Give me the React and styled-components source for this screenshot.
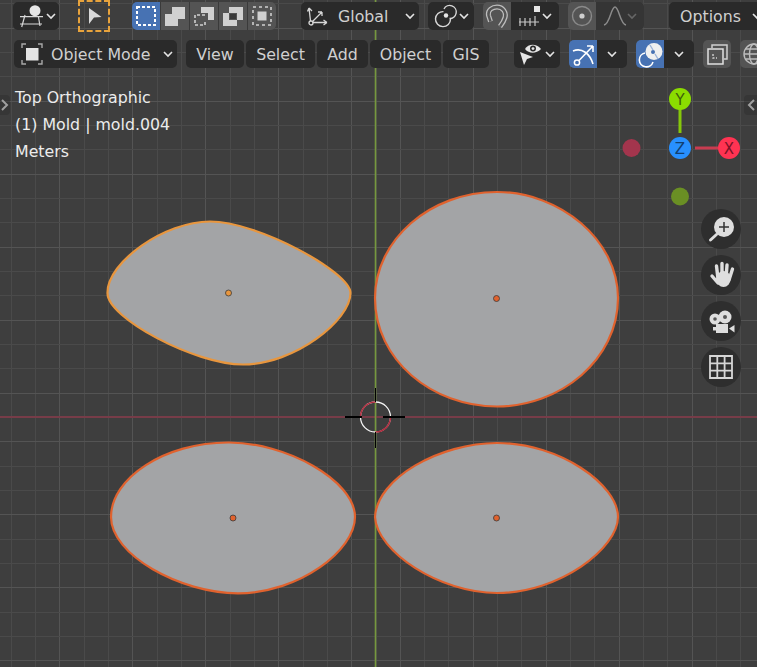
import React from "react";
import styled, { createGlobalStyle } from "styled-components";

const GlobalStyle = createGlobalStyle`
	html, body {
		margin: 0;
		padding: 0;
		background: #3d3d3d;
	}
`;

const Viewport = styled.div`
	position: relative;
	width: 757px;
	height: 667px;
	overflow: hidden;
	background: #3e3e3e;
	font-family: "DejaVu Sans", "Liberation Sans", sans-serif;
	font-size: 15.8px;
	color: #d0d0d0;
`;

const Scene = styled.svg`
	position: absolute;
	inset: 0;
`;

const Header = styled.header`
	position: relative;
	display: flex;
	flex-direction: column;
	gap: 10px;
	padding-top: 2px;
`;

const Row = styled.div`
	display: flex;
	align-items: center;
	height: 28px;
	padding-left: ${(p) => p.$pad}px;
`;

const Pill = styled.div`
	display: flex;
	flex: none;
	align-items: center;
	justify-content: ${(p) => (p.$center ? "center" : "flex-start")};
	gap: ${(p) => p.$gap || 0}px;
	width: ${(p) => p.$w}px;
	height: 28px;
	margin-left: ${(p) => p.$ml || 0}px;
	padding-left: ${(p) => p.$pl || 0}px;
	box-sizing: border-box;
	border-radius: 5px;
	background: #2a2a2a;
	white-space: nowrap;
`;

const PushRight = styled.span`
	display: flex;
	margin-left: auto;
	margin-right: ${(p) => p.$mr}px;
`;

const Split = styled.div`
	display: flex;
	flex: none;
	gap: ${(p) => p.$gap || 0}px;
	height: 28px;
	margin-left: ${(p) => p.$ml || 0}px;
	border-radius: 5px;
	overflow: hidden;
	background: ${(p) => (p.$gap ? "#3a3a3a" : "transparent")};
`;

const tones = {
	blue: "#4772b3",
	gray: "#545454",
	dark: "#2a2a2a",
	dim: "#353535",
};

const Segment = styled.div`
	display: flex;
	align-items: center;
	justify-content: center;
	width: ${(p) => p.$w || 28}px;
	height: 28px;
	background: ${(p) => tones[p.$tone || "gray"]};
`;

const ToolButton = styled.div`
	display: flex;
	flex: none;
	align-items: center;
	justify-content: center;
	width: 32px;
	height: 32px;
	margin: 0 0 0 ${(p) => p.$ml}px;
	box-sizing: border-box;
	border: 2px dashed #e8a33c;
`;

const SquareButton = styled.div`
	display: flex;
	flex: none;
	align-items: center;
	justify-content: center;
	width: 28px;
	height: 28px;
	margin-left: ${(p) => p.$ml}px;
	border-radius: 5px;
	background: #545454;
`;

const Stats = styled.div`
	position: absolute;
	top: 84px;
	left: 15px;
	color: #ececec;
	line-height: 27px;
`;

const SideTab = styled.div`
	position: absolute;
	top: 95px;
	${(p) => (p.$right ? "right: 0;" : "left: 0;")}
	display: flex;
	align-items: center;
	justify-content: center;
	width: ${(p) => (p.$right ? 13 : 10)}px;
	height: 20px;
	border-radius: ${(p) => (p.$right ? "4px 0 0 4px" : "0 4px 4px 0")};
	background: rgba(40, 40, 40, 0.35);
`;

const Gizmo = styled.svg`
	position: absolute;
	top: 85px;
	left: 618px;
`;

const GizmoLetter = styled.text`
	font-family: "DejaVu Sans", sans-serif;
	font-size: 15px;
	text-anchor: middle;
`;

const NavColumn = styled.nav`
	position: absolute;
	top: 209px;
	right: 16px;
	display: flex;
	flex-direction: column;
	gap: 6px;
`;

const NavButton = styled.div`
	display: flex;
	align-items: center;
	justify-content: center;
	width: 40px;
	height: 40px;
	border-radius: 50%;
	background: #2e2e2e;
`;

const INK = "#d8d8d8";

const Chevron = ({ dim }) => (
	<svg width="10" height="7" viewBox="0 0 10 7" style={{ flex: "none" }}>
		<polyline points="1,1 5,5 9,1" fill="none" stroke={dim ? "#666" : "#e4e4e4"} strokeWidth="1.6" />
	</svg>
);

const SideArrow = ({ left }) => (
	<svg width="8" height="12" viewBox="0 0 8 12">
		<polyline points={left ? "7,1 2,6 7,11" : "1,1 6,6 1,11"} fill="none" stroke="#a0a0a0" strokeWidth="2" />
	</svg>
);

const Ico = ({ size = 22, children }) => (
	<svg width={size} height={size} viewBox={`0 0 ${size} ${size}`} fill="none" style={{ flex: "none" }}>
		{children}
	</svg>
);

const EditorIcon = () => (
	<Ico size={24}>
		<circle cx="15" cy="6.7" r="5.5" fill="#e6e6e6" />
		<path d="M0 12.7H23M0 20H22M5 11L1.7 23M18.3 12L20 22" stroke={INK} strokeWidth="1.2" />
	</Ico>
);

const ArrowIcon = () => (
	<Ico size={28}>
		<polygon points="9,6 21.5,15 14,15.5 9,22" fill="#d9d9d9" />
	</Ico>
);

const SelectNew = () => (
	<Ico size={28}>
		<rect x="5" y="5" width="18" height="18" stroke="#fff" strokeWidth="2" strokeDasharray="3 2" />
	</Ico>
);

const SelectExtend = () => (
	<Ico size={28}>
		<path d="M11 5H24V17H17V24H4V12H11Z" fill="#d0d0d0" />
	</Ico>
);

const SelectSubtract = () => (
	<Ico size={28}>
		<path d="M11 5H24V18H18V11H11Z" fill="#d0d0d0" />
		<path d="M15 13H5V23H15V19" stroke="#cfcfcf" strokeWidth="1.6" strokeDasharray="3 2" />
	</Ico>
);

const SelectInvert = () => (
	<Ico size={28}>
		<path d="M10 5H24V18H18V11H10Z" fill="#d0d0d0" />
		<path d="M4 11H10V18H18V24H4Z" fill="#d0d0d0" />
		<rect x="11" y="12" width="6" height="5" fill="#3a3a3a" />
	</Ico>
);

const SelectIntersect = () => (
	<Ico size={28}>
		<rect x="5" y="5" width="18" height="18" stroke="#cfcfcf" strokeWidth="1.6" strokeDasharray="3 3" />
		<rect x="9.5" y="9.5" width="9" height="9" fill="#d0d0d0" />
	</Ico>
);

const OrientationIcon = () => (
	<Ico>
		<circle cx="4" cy="18" r="2" stroke={INK} strokeWidth="1.3" />
		<path
			d="M3.5 16L2 3M2 3L0.5 6.5M2 3L5 6M5.5 17.5H20M20 17.5L16.5 15M20 17.5L16.5 20M5.5 16.5L15 7M15 7H11M15 7V11"
			stroke={INK}
			strokeWidth="1.3"
		/>
	</Ico>
);

const PivotIcon = () => (
	<Ico size={24}>
		<path d="M9.5 7.6A7.5 7.5 0 1 0 16.5 15" stroke={INK} strokeWidth="1.4" />
		<path d="M10 5A6.5 6.5 0 1 1 15.5 14.5" stroke={INK} strokeWidth="1.4" />
		<circle cx="12" cy="11.5" r="2.2" fill="#e6e6e6" />
	</Ico>
);

const MagnetIcon = () => {
	const arc = "M5.5 17.5L3.5 11.5C2.5 6 7.5 3 12 3C18 3 21.5 8.5 20 13.5C19 17 17 20 15 22.5";
	return (
		<Ico size={24}>
			<path d={arc} stroke="#bdbdbd" strokeWidth="5" />
			<path d={arc} stroke="#545454" strokeWidth="2.4" />
		</Ico>
	);
};

const IncrementIcon = () => (
	<Ico size={24}>
		<rect x="16" y="2" width="6" height="6" fill="#e6e6e6" />
		<path d="M1 18H21M2 14V22M7 14V22M12 14V22M17 12V22" stroke="#c8c8c8" strokeWidth="1.2" />
	</Ico>
);

const ProportionalIcon = () => (
	<Ico size={24}>
		<circle cx="12" cy="12" r="9.5" stroke="#8a8a8a" strokeWidth="1.4" />
		<circle cx="12" cy="12" r="2.6" fill="#cfcfcf" />
	</Ico>
);

const FalloffIcon = () => (
	<Ico size={24}>
		<path d="M1 21C7 20 8 3 12 3C16 3 17 20 23 21" stroke="#8a8a8a" strokeWidth="1.5" />
	</Ico>
);

const ModeIcon = () => (
	<Ico>
		<rect x="5" y="5" width="12.5" height="12.5" fill="#e4e4e4" />
		<path d="M1 5V1H5M17 1H21V5M21 17V21H17M5 21H1V17" stroke="#a8a8a8" strokeWidth="1.4" />
	</Ico>
);

const VisibilityIcon = () => (
	<Ico size={24}>
		<path d="M7 7C10 2 18 1 23 7C18 12 11 12 7 7Z" fill="#e6e6e6" />
		<circle cx="15" cy="6.6" r="3" fill="#2a2a2a" />
		<circle cx="15" cy="6.6" r="1.4" fill="#e6e6e6" />
		<polygon points="2,10 15,15 9,17 6,23" fill="#e6e6e6" />
	</Ico>
);

const GizmoIcon = () => (
	<Ico size={28}>
		<circle cx="8" cy="22.5" r="2.6" stroke="#fff" strokeWidth="1.5" />
		<path d="M10 20.5L24 6M24 6H18M24 6V12M4 11C13 7 21 14 24 24" stroke="#fff" strokeWidth="1.6" />
	</Ico>
);

const OverlayIcon = () => (
	<Ico size={28}>
		<path d="M9 13A7 7 0 1 0 17 22" stroke="#fff" strokeWidth="1.6" />
		<circle cx="18" cy="11.5" r="8.5" fill="#f0f0f0" />
		<circle cx="17" cy="12" r="2" fill="#4772b3" />
		<path d="M14 5L17 10M19 14L22 19" stroke="#9db4d8" strokeWidth="1.4" />
	</Ico>
);

const XrayIcon = () => (
	<Ico size={28}>
		<path d="M9 8V5H24V19H21" stroke="#cfcfcf" strokeWidth="1.5" />
		<rect x="5" y="9" width="15" height="15" stroke="#e0e0e0" strokeWidth="1.5" />
		<path d="M10 14V18H14" stroke="#d0d0d0" strokeWidth="1.4" strokeDasharray="2 1.5" />
	</Ico>
);

const GlobeIcon = () => (
	<Ico size={28}>
		<circle cx="14" cy="14" r="10" stroke="#bdbdbd" strokeWidth="1.4" />
		<ellipse cx="14" cy="14" rx="4.5" ry="10" stroke="#bdbdbd" strokeWidth="1.4" />
		<path d="M4 14H24M5.5 9H22.5M5.5 19H22.5" stroke="#bdbdbd" strokeWidth="1.3" />
	</Ico>
);

const ZoomIcon = () => (
	<Ico size={40}>
		<circle cx="23" cy="18" r="10" fill="#dedede" />
		<path d="M23 13V23M18 18H28" stroke="#333" strokeWidth="1.5" />
		<path d="M15.5 25.5L9.5 31" stroke="#dedede" strokeWidth="3" strokeLinecap="round" />
	</Ico>
);

const HandIcon = () => (
	<Ico size={40}>
		<path
			d="M17 28L11 21M17 24L15.5 11M21 24L21 8.5M25 24L26 10M28 25L31.5 14"
			stroke="#dedede"
			strokeWidth="3.4"
			strokeLinecap="round"
		/>
		<ellipse cx="22.5" cy="24" rx="7" ry="8" fill="#dedede" />
	</Ico>
);

const CameraIcon = () => (
	<Ico size={40}>
		<circle cx="14" cy="18" r="5.5" fill="#dedede" />
		<circle cx="24" cy="16" r="6.5" fill="#dedede" />
		<circle cx="14" cy="18" r="1.8" fill="#555" />
		<circle cx="24" cy="16" r="2" fill="#555" />
		<rect x="15" y="23" width="12" height="9" fill="#dedede" />
		<rect x="12" y="26" width="3" height="3.5" fill="#dedede" />
		<polygon points="28,27.5 33.5,24 33.5,31.5" fill="#dedede" />
	</Ico>
);

const GridIcon = () => (
	<Ico size={40}>
		<path d="M9 9H31V31H9ZM16.3 9V31M23.6 9V31M9 16.3H31M9 23.6H31" stroke="#d6d6d6" strokeWidth="1.8" />
	</Ico>
);

const STEP = 24.33;
const CX = 375.5;
const CY = 417;
const steps = Array.from({ length: 61 }, (_, i) => i - 30);
const gridTone = (k) => (Math.abs(k) % 3 === 1 ? "#545454" : "#4a4a4a");

const GridLines = () => (
	<g shapeRendering="crispEdges">
		{steps.map((k) => (
			<line
				key={`v${k}`}
				x1={Math.round(CX + k * STEP) + 0.5}
				x2={Math.round(CX + k * STEP) + 0.5}
				y1="0"
				y2="667"
				stroke={gridTone(k)}
			/>
		))}
		{steps.map((k) => (
			<line
				key={`h${k}`}
				y1={Math.round(CY + k * STEP) + 0.5}
				y2={Math.round(CY + k * STEP) + 0.5}
				x1="0"
				x2="757"
				stroke={gridTone(k)}
			/>
		))}
	</g>
);

const molds = [
	{
		d: "M107.5 293C107 262 165 221.5 210 221.5C258 221.5 350 272 350.5 293C350.5 320 295 364.5 243 364.5C195 364.5 107 318 107.5 293Z",
		dot: [228.5, 293],
		color: "#e8963e",
	},
	{
		d: "M375 298C375 240 430 192 497 192C560 192 618 240 618 298C618 360 560 406.5 497 406.5C432 406.5 375 360 375 298Z",
		dot: [496.5, 298.5],
		color: "#e0622e",
	},
	{
		d: "M111 517C111 478 165 442.5 228 442.5C285 442 355 480 355 517C355 550 300 593 238 593.3C180 593 111 555 111 517Z",
		dot: [233, 518],
		color: "#e0622e",
	},
	{
		d: "M375 517C377 478 440 443 497 443C560 443 618 485 618 517C618 548 560 593 497 593C440 593 377 552 375 517Z",
		dot: [496.5, 518],
		color: "#e0622e",
	},
];

const Cursor = () => (
	<g>
		<circle cx={CX} cy={CY} r="15" fill="none" stroke="#f4f4f4" strokeWidth="1.3" />
		<circle cx={CX} cy={CY} r="15" fill="none" stroke="#b02c3e" strokeWidth="1.5" strokeDasharray="23.56 23.56" />
		<path
			d={`M${CX} 388V402M${CX} 432V448M345 ${CY}H362M383 ${CY}H405`}
			stroke="#000"
			strokeWidth="1.3"
			shapeRendering="crispEdges"
		/>
	</g>
);

const App = () => (
	<>
		<GlobalStyle />
		<Viewport>
			<Scene width="757" height="667" viewBox="0 0 757 667">
				<GridLines />
				<line x1="0" x2="757" y1="417" y2="417" stroke="#773c48" strokeWidth="2" />
				<line x1={CX} x2={CX} y1="0" y2="667" stroke="#76983e" strokeWidth="1.6" />
				{molds.map((m) => (
					<g key={m.d}>
						<path d={m.d} fill="#a3a4a6" stroke={m.color} strokeWidth="2.2" />
						<circle cx={m.dot[0]} cy={m.dot[1]} r="3" fill={m.color} stroke="#3a3a3a" strokeWidth="0.8" />
					</g>
				))}
				<Cursor />
			</Scene>

			<Header>
				<Row $pad={13}>
					<Pill $w={46} $pl={7} $gap={2}>
						<EditorIcon />
						<Chevron />
					</Pill>
					<ToolButton $ml={19}>
						<ArrowIcon />
					</ToolButton>
					<Split $ml={22} $gap={1}>
						<Segment $tone="blue"><SelectNew /></Segment>
						<Segment><SelectExtend /></Segment>
						<Segment><SelectSubtract /></Segment>
						<Segment><SelectInvert /></Segment>
						<Segment><SelectIntersect /></Segment>
					</Split>
					<Pill $w={118} $ml={25} $pl={6} $gap={9}>
						<OrientationIcon />
						<span>Global</span>
						<PushRight $mr={4}><Chevron /></PushRight>
					</Pill>
					<Pill $w={46} $ml={9} $pl={6} $gap={1}>
						<PivotIcon />
						<Chevron />
					</Pill>
					<Split $ml={9}>
						<Segment><MagnetIcon /></Segment>
						<Segment $tone="dark" $w={48}>
							<IncrementIcon />
							<Chevron />
						</Segment>
					</Split>
					<Split $ml={9}>
						<Segment><ProportionalIcon /></Segment>
						<Segment $tone="dim" $w={48}>
							<FalloffIcon />
							<Chevron dim />
						</Segment>
					</Split>
					<Pill $w={100} $ml={25} $pl={11} $gap={11}>
						<span>Options</span>
						<Chevron />
					</Pill>
				</Row>
				<Row $pad={14}>
					<Pill $w={163} $pl={7} $gap={8}>
						<ModeIcon />
						<span>Object Mode</span>
						<PushRight $mr={4}><Chevron /></PushRight>
					</Pill>
					<Pill $w={58} $ml={9} $center>View</Pill>
					<Pill $w={69} $ml={2} $center>Select</Pill>
					<Pill $w={51} $ml={2} $center>Add</Pill>
					<Pill $w={71} $ml={2} $center>Object</Pill>
					<Pill $w={46} $ml={2} $center>GIS</Pill>
					<Pill $w={46} $ml={25} $pl={4} $gap={3}>
						<VisibilityIcon />
						<Chevron />
					</Pill>
					<Split $ml={9}>
						<Segment $tone="blue"><GizmoIcon /></Segment>
						<Segment $tone="dark" $w={30}><Chevron /></Segment>
					</Split>
					<Split $ml={9}>
						<Segment $tone="blue"><OverlayIcon /></Segment>
						<Segment $tone="dark" $w={30}><Chevron /></Segment>
					</Split>
					<SquareButton $ml={9}><XrayIcon /></SquareButton>
					<SquareButton $ml={9}><GlobeIcon /></SquareButton>
				</Row>
			</Header>

			<Stats>
				<div>Top Orthographic</div>
				<div>(1) Mold | mold.004</div>
				<div>Meters</div>
			</Stats>

			<SideTab><SideArrow /></SideTab>
			<SideTab $right><SideArrow left /></SideTab>

			<Gizmo width="125" height="125" viewBox="618 85 125 125">
				<line x1="680" x2="680" y1="109" y2="133" stroke="#86c80a" strokeWidth="3" />
				<line x1="695" x2="718" y1="148" y2="148" stroke="#c83c50" strokeWidth="3" />
				<circle cx="631.5" cy="148" r="9" fill="#a3354d" />
				<circle cx="680" cy="196.5" r="9" fill="#6a8f24" />
				<circle cx="680" cy="99" r="11" fill="#8bdc00" />
				<circle cx="680" cy="148" r="11" fill="#2890ff" />
				<circle cx="729" cy="148" r="11" fill="#ff3352" />
				<GizmoLetter x="680" y="104.5" fill="#3f5f0a">Y</GizmoLetter>
				<GizmoLetter x="680" y="153.5" fill="#123f70">Z</GizmoLetter>
				<GizmoLetter x="729" y="153.5" fill="#7c1226">X</GizmoLetter>
			</Gizmo>

			<NavColumn>
				<NavButton><ZoomIcon /></NavButton>
				<NavButton><HandIcon /></NavButton>
				<NavButton><CameraIcon /></NavButton>
				<NavButton><GridIcon /></NavButton>
			</NavColumn>
		</Viewport>
	</>
);

export default App;
